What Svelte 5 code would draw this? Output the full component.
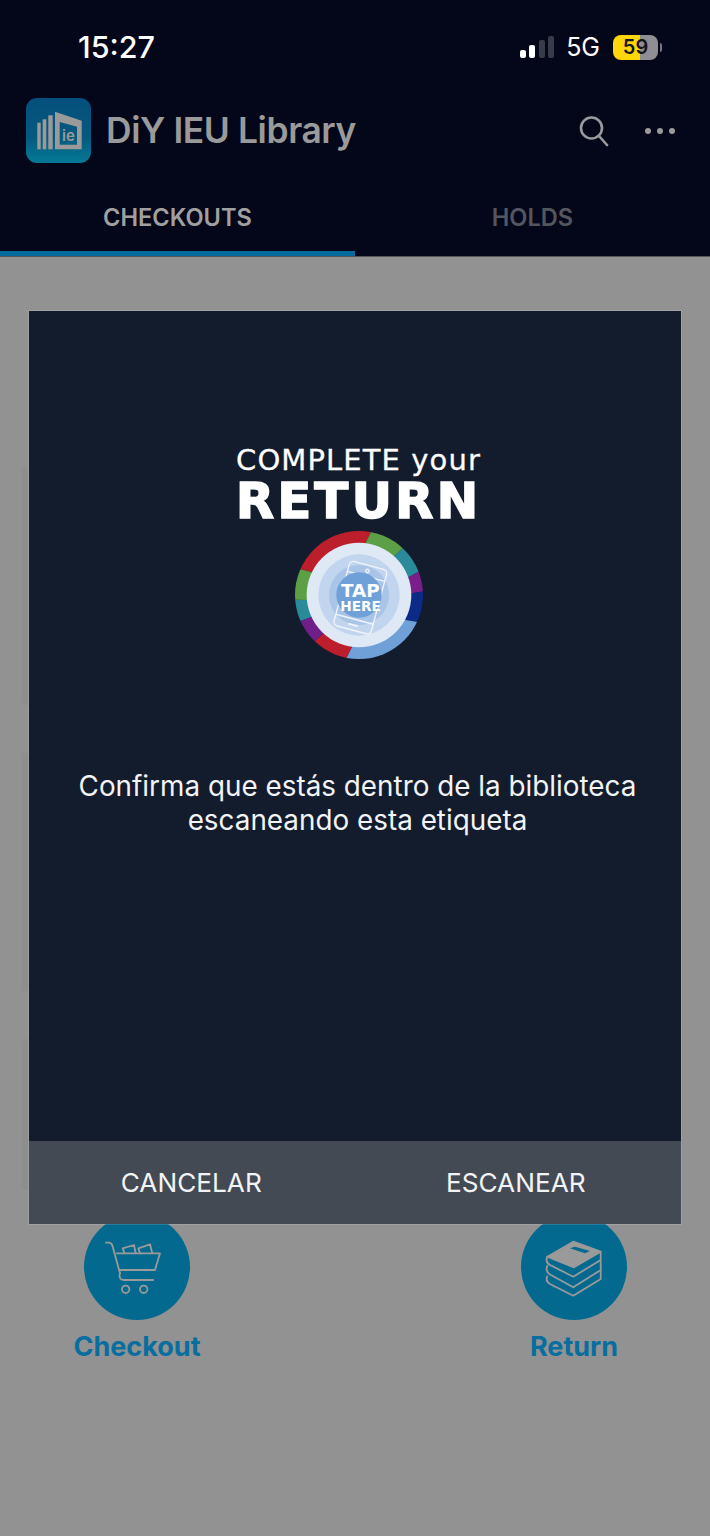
<script>
  // ring colours, clockwise from the left edge of the top red band
  // each seam is [inner x, inner y, outer x, outer y] in the badge's own coords
  const cx = 221;
  const cy = 210;
  const seams = [
    [75, 140, 40, 150],
    [240, 55, 285, 30],
    [325, 95, 350, 80],
    [372, 155, 395, 130],
    [378, 205, 412, 190],
    [362, 285, 405, 265],
    [200, 365, 160, 385],
    [120, 320, 90, 335],
    [80, 275, 45, 280],
    [65, 225, 30, 215]
  ];
  const colors = ["#bd1e2c", "#5d9f47", "#2a8a99", "#7a1f8a", "#0c2b86", "#6fa0d8", "#bd1e2c", "#6f1f8a", "#2a8a9a", "#5d9f47"];

  const far = (x, y) => `${cx + (x - cx) * 2.2},${cy + (y - cy) * 2.2}`;
  const wedges = seams.map((a, i) => {
    const b = seams[(i + 1) % seams.length];
    return {
      color: colors[i],
      points: `${cx},${cy} ${a[0]},${a[1]} ${far(a[2], a[3])} ${far(b[2], b[3])} ${b[0]},${b[1]}`
    };
  });

  const cards = ["first", "second", "third"];
</script>

<div class="page">
  <header>
    <div class="status">
      <span class="time">15:27</span>
      <div class="status-right">
        <div class="signal">
          <i class="on b1"></i>
          <i class="on b2"></i>
          <i class="b3"></i>
          <i class="b4"></i>
        </div>
        <span class="net">5G</span>
        <div class="battery">59</div>
      </div>
    </div>

    <div class="toolbar">
      <div class="logo">
        <svg viewBox="0 0 65 65" width="65" height="65">
          <g fill="#9a9a9a">
            <rect x="11.3" y="24.7" width="3.4" height="26.6" />
            <rect x="16.7" y="21.3" width="3.6" height="30" />
            <rect x="22.3" y="17.3" width="4.4" height="34" />
            <path fill-rule="evenodd" d="M29 13.7 55.7 22.7V51.3H29ZM33.7 24V46.7H51V28.7Z" />
          </g>
          <text x="42.5" y="42.5" class="logo-text">ie</text>
        </svg>
      </div>
      <h1>DiY IEU Library</h1>
      <div class="tools">
        <svg viewBox="0 0 32 32" width="32" height="32" fill="none" stroke="#9a9a9a" stroke-width="2.6" stroke-linecap="round">
          <circle cx="13.5" cy="13" r="10.5" />
          <path d="M21 21 29 30" />
        </svg>
        <svg viewBox="0 0 32 8" width="32" height="8" fill="#9a9a9a">
          <circle cx="4" cy="4" r="3" />
          <circle cx="16" cy="4" r="3" />
          <circle cx="28" cy="4" r="3" />
        </svg>
      </div>
    </div>

    <nav>
      <div class="tab active">CHECKOUTS</div>
      <div class="tab">HOLDS</div>
    </nav>
  </header>

  <main>
    <div class="cards">
      {#each cards as card, i}
        <div class={"card " + card}></div>
      {/each}
    </div>

    <div class="actions">
      <div class="action">
        <div class="circle">
          <svg viewBox="0 0 106 106" width="106" height="106" fill="none" stroke="#9a9a9a" stroke-width="1.8" stroke-linecap="round" stroke-linejoin="round">
            <path d="M22 28.7H25Q27.7 29 28.5 32L36 59.3" />
            <path d="M32.7 39.3H76L71 56H35.3" />
            <path d="M69.3 66H40Q36 66 35.6 62.5 35.5 59.5 36 59.3" />
            <circle cx="41.7" cy="75.3" r="3.7" />
            <circle cx="59.7" cy="75.3" r="3.7" />
            <path d="M40.3 39.3 38.7 34.3 50 31 51.7 39.3" />
            <path d="M56 39.3 54.3 34.3 66 30.3 68.3 39.3" />
          </svg>
        </div>
        <span>Checkout</span>
      </div>
      <div class="action">
        <div class="circle">
          <svg viewBox="0 0 106 106" width="106" height="106" fill="none" stroke="#9a9a9a" stroke-width="1.8" stroke-linecap="round" stroke-linejoin="round">
            <path fill="#9a9a9a" d="M52.3 27.7 79.7 37.7 53 53.3 26.3 42.7Z" />
            <path fill="#03698f" stroke="none" d="M49 34.3 54 32.7 69 37 64 39.3Z" />
            <path d="M26.3 42.7Q24 48 29 51L52.3 62.7 79.7 46V37.7" />
            <path d="M26.3 52Q24 57 29 60.5L52.3 73.3 79.7 56V47" />
            <path d="M26.3 62.5Q24 67 29 70L52.3 81.7 79.7 65V56.5" />
          </svg>
        </div>
        <span>Return</span>
      </div>
    </div>
  </main>

  <div class="dialog">
    <div class="dialog-body">
      <div class="promo">
        <div class="promo-line">COMPLETE your</div>
        <div class="promo-big">RETURN</div>
        <svg class="badge" viewBox="29 18 384 384" width="128" height="128">
          <defs>
            <clipPath id="ring"><circle cx={cx} cy={cy} r="192" /></clipPath>
          </defs>
          <g clip-path="url(#ring)">
            {#each wedges as w}
              <polygon points={w.points} fill={w.color} />
            {/each}
          </g>
          <circle cx={cx} cy={cy} r="157" fill="#dfe8f5" />
          <circle cx={cx} cy={cy} r="122" fill="#c2d5ee" />
          <circle cx={cx} cy={cy} r="90" fill="#a8c4e6" />
          <g transform="rotate(15 225 218)" fill="none" stroke="#f1f5fb" stroke-width="4">
            <rect x="167" y="118" width="116" height="200" rx="13" />
            <path d="M167 152H283M167 285H283" />
            <circle cx="225" cy="135" r="5" />
            <rect x="210" y="300" width="30" height="5" fill="#f1f5fb" stroke="none" />
          </g>
          <circle cx={cx} cy={cy} r="68" fill="#6fa0d8" />
          <text x="225" y="215" class="tap">TAP</text>
          <text x="226" y="257" class="here">HERE</text>
        </svg>
      </div>
      <p>Confirma que estás dentro de la biblioteca<br />escaneando esta etiqueta</p>
    </div>
    <div class="dialog-footer">
      <button>CANCELAR</button>
      <button>ESCANEAR</button>
    </div>
  </div>
</div>

<style>
  :global(body) {
    background: #929292;
  }
  .page {
    position: relative;
    width: 710px;
    height: 1536px;
    overflow: hidden;
    background: #929292;
    font-family: Inter, "Liberation Sans", sans-serif;
    display: flex;
    flex-direction: column;
  }
  header {
    background: #040719;
    border-bottom: 1px solid #55565c;
  }
  .status {
    height: 98px;
    box-sizing: border-box;
    padding: 28px 52px 0 78px;
    display: flex;
    justify-content: space-between;
    align-items: flex-start;
  }
  .time {
    color: #fff;
    font-size: 30.5px;
    line-height: 38px;
    font-weight: 500;
  }
  .status-right {
    display: flex;
    align-items: center;
    height: 38px;
  }
  .signal {
    display: flex;
    align-items: flex-end;
    gap: 3.5px;
    height: 22px;
  }
  .signal i {
    display: block;
    width: 6px;
    border-radius: 2px;
    background: #383b48;
  }
  .signal i.on {
    background: #fff;
  }
  .b1 { height: 8px; }
  .b2 { height: 13px; }
  .b3 { height: 18px; }
  .b4 { height: 22px; }
  .net {
    color: #fff;
    font-size: 25px;
    font-weight: 400;
    margin-left: 12px;
    margin-right: 13px;
  }
  .battery {
    position: relative;
    width: 45px;
    height: 25px;
    border-radius: 8px;
    background: linear-gradient(90deg, #ffd60a 60%, #8e8e93 60%);
    color: #15151a;
    font-size: 20px;
    font-weight: 600;
    line-height: 25px;
    text-align: center;
  }
  .battery::after {
    content: "";
    position: absolute;
    right: -4px;
    top: 8px;
    width: 2px;
    height: 9px;
    border-radius: 0 2px 2px 0;
    background: #77777c;
  }
  .toolbar {
    height: 65px;
    padding: 0 34px 0 26px;
    display: flex;
    align-items: center;
  }
  .logo {
    width: 65px;
    height: 65px;
    border-radius: 11px;
    overflow: hidden;
    background: linear-gradient(180deg, #054f7c 0%, #05597f 60%, #057a96 100%);
  }
  .logo svg {
    display: block;
  }
  .logo-text {
    fill: #9a9a9a;
    font-size: 15px;
    font-weight: 600;
    text-anchor: middle;
  }
  h1 {
    margin: 0 0 0 15px;
    color: #9a9a9a;
    font-size: 35.4px;
    font-weight: 600;
    letter-spacing: -0.4px;
    flex: 1;
  }
  .tools {
    display: flex;
    align-items: center;
    gap: 34px;
  }
  nav {
    display: flex;
    height: 93px;
    box-sizing: border-box;
    padding-top: 22px;
  }
  .tab {
    flex: 1;
    display: flex;
    align-items: center;
    justify-content: center;
    font-size: 23.6px;
    font-weight: 600;
    color: #54565f;
    padding-bottom: 2px;
    border-bottom: 5px solid transparent;
  }
  .tab.active {
    color: #a0a0a0;
    border-bottom-color: #05699b;
  }
  main {
    flex: 1;
    padding-top: 210px;
  }
  /* the cards sit behind the dialog, only their left edge shows */
  .cards {
    display: flex;
    flex-direction: column;
    gap: 48px;
    padding: 0 60px 0 22px;
  }
  .card {
    background: #8e8e8e;
    border-radius: 3px;
    height: 238px;
  }
  .card.third {
    height: 151px;
  }
  .actions {
    display: flex;
    justify-content: space-between;
    padding: 0 72px 0 73px;
    margin-top: 24px;
  }
  .action {
    width: 128px;
    display: flex;
    flex-direction: column;
    align-items: center;
    gap: 10px;
    color: #076e9f;
    font-size: 27px;
    font-weight: 700;
  }
  .circle {
    width: 106px;
    height: 106px;
    border-radius: 50%;
    background: #03698f;
  }
  .circle svg {
    display: block;
  }
  .dialog {
    position: absolute;
    left: 29px;
    top: 311px;
    width: 652px;
    height: 913px;
    background: #131c2d;
    box-shadow: 0 0 0 1px rgba(255, 255, 255, 0.14);
    display: flex;
    flex-direction: column;
  }
  .dialog-body {
    flex: 1;
    display: flex;
    flex-direction: column;
    align-items: center;
    padding-top: 134px;
    padding-left: 5px;
  }
  .promo {
    display: flex;
    flex-direction: column;
    align-items: center;
    color: #fff;
    margin-left: 2px;
    font-family: "DejaVu Sans", sans-serif;
  }
  .promo-line {
    font-size: 29px;
    font-weight: 400;
    line-height: 30px;
    letter-spacing: 1.1px;
    -webkit-text-stroke: 0.3px #fff;
  }
  .promo-big {
    font-size: 50px;
    font-weight: 700;
    line-height: 50px;
    letter-spacing: 3px;
    margin-top: 1px;
    margin-bottom: 5px;
    -webkit-text-stroke: 1.4px #fff;
  }
  .badge {
    display: block;
  }
  .tap {
    fill: #fff;
    font-family: "DejaVu Sans", sans-serif;
    font-size: 55px;
    font-weight: 700;
    text-anchor: middle;
  }
  .here {
    fill: #fff;
    font-family: "DejaVu Sans", sans-serif;
    font-size: 41px;
    font-weight: 700;
    text-anchor: middle;
  }
  p {
    margin: 110px 0 0;
    color: #f2f3f5;
    font-size: 27.85px;
    line-height: 34px;
    text-align: center;
  }
  .dialog-footer {
    height: 83px;
    display: flex;
    background: #434a54;
    padding-right: 3px;
  }
  button {
    flex: 1;
    border: none;
    background: none;
    padding: 0;
    color: #f2f3f5;
    font-family: inherit;
    font-size: 26.2px;
    font-weight: 400;
  }
</style>
